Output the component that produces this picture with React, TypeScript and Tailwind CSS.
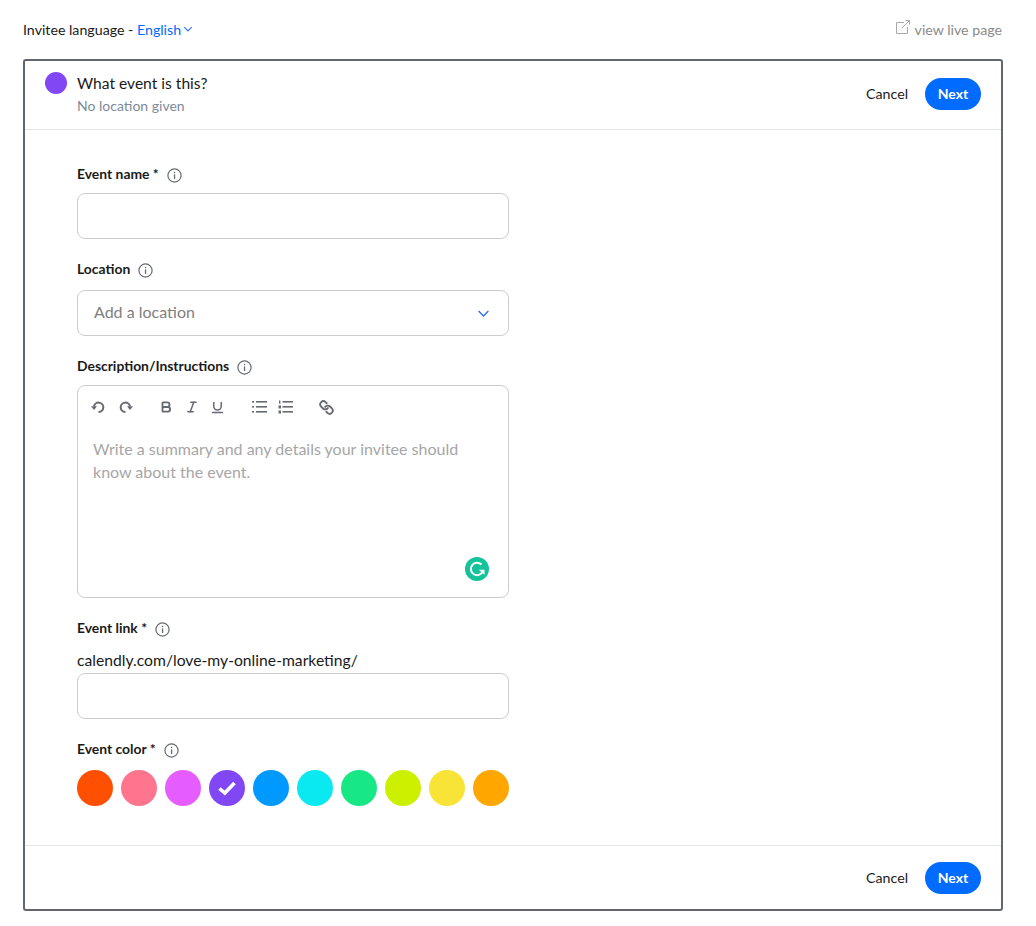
import { Bold, Italic, Underline, Link } from 'lucide-react';

const colors = ['#ff4f00', '#ff758e', '#e55cff', '#8247f5', '#0099ff', '#0ae8f0', '#17e885', '#ccf000', '#f8e436', '#ffa600'];

function InfoIcon() {
  return (
    <svg width="15" height="15" viewBox="0 0 15 15" fill="none" className="mt-0.5 shrink-0">
      <circle cx="7.5" cy="7.5" r="6.6" stroke="#666a73" strokeWidth="1.2" />
      <rect x="6.9" y="6.4" width="1.3" height="4.6" fill="#666a73" />
      <rect x="6.9" y="3.8" width="1.3" height="1.4" fill="#666a73" />
    </svg>
  );
}

function Label({ text }: { text: string }) {
  return (
    <div className="flex h-5 items-center gap-2 text-[13.9px] font-bold leading-5 text-[#1a1a1a]">
      <span>{text}</span>
      <InfoIcon />
    </div>
  );
}

function Actions() {
  return (
    <div className="flex items-center gap-[17px]">
      <span className="text-[14.2px] text-[#1a1a1a]">Cancel</span>
      <button className="h-8 w-14 rounded-full bg-[#006bff] text-sm font-bold text-white">Next</button>
    </div>
  );
}

function Chevron({ size }: { size: number }) {
  return (
    <svg width={size} height={size} viewBox="0 0 12 12" fill="none" stroke="#2f6ff0" strokeWidth="1.3">
      <path d="M1.5 3.8L6 8.3L10.5 3.8" />
    </svg>
  );
}

function Undo({ flip }: { flip?: boolean }) {
  return (
    <svg width="14" height="12" viewBox="0 0 14 12" fill="none" className={flip ? '-scale-x-100' : ''}>
      <path d="M3 5.5A4.7 4.7 0 1 1 7.5 11" stroke="#666a73" strokeWidth="2" />
      <path d="M0 5.2H6L3 9Z" fill="#666a73" />
    </svg>
  );
}

function BulletList() {
  return (
    <svg width="15" height="14" viewBox="0 0 15 14" fill="#666a73">
      <rect x="0" y="1" width="2" height="1.6" />
      <rect x="0" y="6" width="2" height="1.6" />
      <rect x="0" y="11" width="2" height="1.6" />
      <rect x="4" y="1" width="11" height="1.6" />
      <rect x="4" y="6" width="11" height="1.6" />
      <rect x="4" y="11" width="11" height="1.6" />
    </svg>
  );
}

function NumberList() {
  return (
    <svg width="15" height="14" viewBox="0 0 15 14" fill="#666a73">
      <rect x="1" y="0.5" width="1.4" height="3.2" />
      <rect x="0.5" y="5.5" width="2.5" height="3" />
      <rect x="0.5" y="10.5" width="2.5" height="3" />
      <rect x="4.5" y="1" width="10.5" height="1.6" />
      <rect x="4.5" y="6" width="10.5" height="1.6" />
      <rect x="4.5" y="11" width="10.5" height="1.6" />
    </svg>
  );
}

export default function App() {
  return (
    <div className="h-[926px] w-[1036px] bg-white px-[23px] font-['Lato',sans-serif] text-[#1a1a1a]">
      <div className="flex h-[59px] w-[980px] items-center justify-between">
        <div className="flex items-center text-[14.2px]">
          <span>Invitee language -&nbsp;</span>
          <span className="text-[#006bff]">English</span>
          <span className="ml-[2px]"><Chevron size={10} /></span>
        </div>
        <div className="flex items-center gap-1 pr-px text-[14.2px] text-[#8a8a8a]">
          <svg width="16" height="16" viewBox="0 0 16 16" fill="none" stroke="#a8a8a8" strokeWidth="1" className="-mt-1">
            <path d="M9 3.5H1.5V14.5H12.5V8" />
            <path d="M7 9L14.5 1.5M10.5 1.5H14.5V5.5" />
          </svg>
          <span>view live page</span>
        </div>
      </div>

      <div className="flex h-[852px] w-[980px] flex-col rounded-[3px] border-2 border-[#62666f]">
        <div className="flex h-[69px] shrink-0 justify-between border-b border-[#e5e5e5] pl-5 pr-5">
          <div className="flex gap-2.5 pt-[11px]">
            <div className="h-[22px] w-[22px] rounded-full bg-[#8247f5]" />
            <div className="-mt-px">
              <div className="text-[15.6px] leading-[24px]">What event is this?</div>
              <div className="mt-0.5 text-sm leading-[18px] text-[#7d8a99]">No location given</div>
            </div>
          </div>
          <div className="flex items-center pb-[2px]">
            <Actions />
          </div>
        </div>

        <div className="flex-1 px-[52px] pt-[34px]">
          <div className="w-[432px]">
            <Label text="Event name *" />
            <div className="mt-[9px] h-[46px] rounded-lg border border-[#cccccc]" />

            <div className="mt-5">
              <Label text="Location" />
            </div>
            <div className="mt-[11px] flex h-[46px] items-center justify-between rounded-lg border border-[#cccccc] pl-4 pr-[18px] text-base text-[#808080]">
              <span className="-mt-[2px]">Add a location</span>
              <Chevron size={13} />
            </div>

            <div className="mt-5">
              <Label text="Description/Instructions" />
            </div>
            <div className="relative mt-[9px] h-[213px] rounded-lg border border-[#cccccc] px-[15px] pt-[12px]">
              <div className="flex h-[18px] items-center text-[#666a73]">
                <div className="-ml-[2px]"><Undo /></div>
                <div className="ml-[14px]"><Undo flip /></div>
                <Bold size={14} strokeWidth={3.2} className="ml-[26px]" />
                <Italic size={14} strokeWidth={2.6} className="ml-[12px]" />
                <Underline size={15} strokeWidth={2.4} className="ml-[11px]" />
                <div className="ml-[27px]"><BulletList /></div>
                <div className="ml-[11px]"><NumberList /></div>
                <Link size={15} strokeWidth={3} className="ml-[26px] -scale-x-100" />
              </div>
              <p className="mt-[21px] text-base leading-[23px] text-[#a6a6a6]">
                Write a summary and any details your invitee should know about the event.
              </p>
              <div className="absolute bottom-4 right-[19px] flex h-6 w-6 items-center justify-center rounded-full bg-[#15c39a]">
                <svg width="20" height="20" viewBox="0 0 16 16" fill="none" stroke="#ffffff" strokeWidth="1.6">
                  <path d="M11.6 4.4A5 5 0 1 0 12.6 10" />
                  <path d="M9.5 8.6H14V12.5Z" fill="#ffffff" stroke="none" />
                </svg>
              </div>
            </div>

            <div className="mt-5">
              <Label text="Event link *" />
            </div>
            <div className="mt-[12px] text-[15.7px] leading-5">calendly.com/love-my-online-marketing/</div>
            <div className="mt-[3px] h-[46px] rounded-lg border border-[#cccccc]" />

            <div className="mt-5">
              <Label text="Event color *" />
            </div>
            <div className="mt-[11px] flex gap-2">
              {colors.map((c, i) => (
                <div key={c} className="flex h-9 w-9 items-center justify-center rounded-full" style={{ backgroundColor: c }}>
                  {i === 3 && (
                    <svg width="18" height="15" viewBox="0 0 18 15" fill="none" stroke="#ffffff" strokeWidth="3.6">
                      <path d="M1.5 7.5L6.8 12L16.5 2" />
                    </svg>
                  )}
                </div>
              ))}
            </div>
          </div>
        </div>

        <div className="flex h-[64px] shrink-0 items-center justify-end border-t border-[#e5e5e5] pr-5">
          <Actions />
        </div>
      </div>
    </div>
  );
}
